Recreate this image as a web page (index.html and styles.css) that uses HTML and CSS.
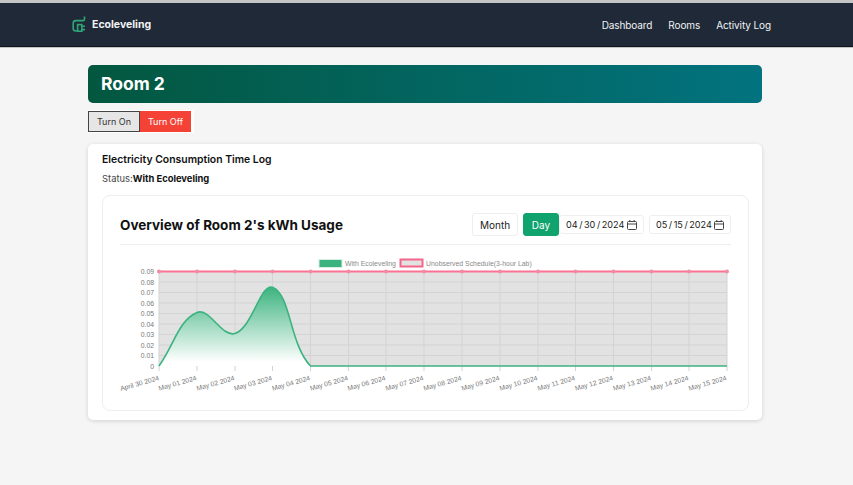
FILE: index.html
```html
<!DOCTYPE html>
<html lang="en">

<head>
    <meta charset="UTF-8">
    <meta name="viewport" content="width=device-width, initial-scale=1.0">
    <title>Room 2</title>
    <link rel="stylesheet" href="styles.css">
</head>

<body>
    <nav class="navbar">
        <a class="brand" href="#">
            <svg class="brand-icon" width="14" height="17" viewBox="0 0 14 17" fill="none" stroke="#2fa678" stroke-width="1.6">
                <path d="M12.5 0.5V3.2Q12.5 4.6 11 4.6H4Q1.2 4.6 1.2 7.2V12.5Q1.2 15 4 15H5.5" />
                <rect x="5.6" y="8.6" width="4.2" height="6.6" fill="#1f2937" />
                <path d="M9.8 10.2H13M9.8 13.6H13" />
            </svg>
            Ecoleveling
        </a>
        <ul class="nav-links">
            <li><a href="#">Dashboard</a></li>
            <li><a href="#">Rooms</a></li>
            <li><a href="#">Activity Log</a></li>
        </ul>
    </nav>

    <main class="content">
        <h1 class="room-banner">Room 2</h1>

        <div class="power-buttons">
            <button class="btn-on" type="button">Turn On</button>
            <button class="btn-off" type="button">Turn Off</button>
        </div>

        <section class="log-card">
            <h2>Electricity Consumption Time Log</h2>
            <p class="status">Status:<strong>With Ecoleveling</strong></p>

            <div class="chart-card">
                <div class="chart-header">
                    <h3>Overview of Room 2's kWh Usage</h3>
                    <div class="chart-controls">
                        <button class="btn-range" type="button">Month</button>
                        <button class="btn-range active" type="button">Day</button>
                        <div class="date-field">
                            04 / 30 / 2024
                            <svg width="10" height="10" viewBox="0 0 10 10" fill="none" stroke="#444" stroke-width="1">
                                <rect x="0.5" y="1.5" width="9" height="8" rx="1" />
                                <path d="M0.5 4H9.5M2.800 0V2M7.200 0V2" />
                            </svg>
                        </div>
                        <div class="date-field date-field-end">
                            05 / 15 / 2024
                            <svg width="10" height="10" viewBox="0 0 10 10" fill="none" stroke="#444" stroke-width="1">
                                <rect x="0.5" y="1.5" width="9" height="8" rx="1" />
                                <path d="M0.5 4H9.5M2.800 0V2M7.200 0V2" />
                            </svg>
                        </div>
                    </div>
                </div>

                <svg class="chart" width="611" height="150" viewBox="120 250 611 150">
                    <defs>
                        <linearGradient id="greenFade" gradientUnits="userSpaceOnUse" x1="0" y1="287" x2="0" y2="362">
                            <stop offset="0" stop-color="#3cb37f" />
                            <stop offset="1" stop-color="#ffffff" />
                        </linearGradient>
                    </defs>

                    <!-- legend -->
                    <rect x="319" y="259.500" width="23" height="8" fill="#3cb37f" stroke="#d5efe3" />
                    <text class="legend-text" x="345" y="265.500">With Ecoleveling</text>
                    <rect x="400.500" y="259.500" width="22" height="7" fill="#e2e2e2" stroke="#f4668a" stroke-width="2" />
                    <text class="legend-text" x="426" y="265.500">Unobserved Schedule(3-hour Lab)</text>

                    <!-- plot area and grid -->
                    <rect x="159" y="271.500" width="568" height="94.500" fill="#e2e2e2" />
                    <path class="grid" d="M159 282H727M159 292.500H727M159 303H727M159 313.500H727M159 324H727M159 334.500H727M159 345H727M159 355.500H727" />
                    <path class="grid" d="M159 271.500V371M197 271.500V371M235 271.500V371M272.500 271.500V371M310.500 271.500V371M348.500 271.500V371M386 271.500V371M424 271.500V371M462 271.500V371M500 271.500V371M538 271.500V371M575.500 271.500V371M613.500 271.500V371M651.500 271.500V371M689 271.500V371M727 271.500V371" />

                    <!-- y axis -->
                    <g class="axis-text" text-anchor="end">
                        <text x="154" y="274">0.09</text>
                        <text x="154" y="284.500">0.08</text>
                        <text x="154" y="295">0.07</text>
                        <text x="154" y="305.500">0.06</text>
                        <text x="154" y="316">0.05</text>
                        <text x="154" y="326.500">0.04</text>
                        <text x="154" y="337">0.03</text>
                        <text x="154" y="347.500">0.02</text>
                        <text x="154" y="358">0.01</text>
                        <text x="154" y="368.500">0</text>
                    </g>

                    <!-- with ecoleveling -->
                    <path d="M159 366C174.200 344.600 178.700 320.300 197 312.500C209.100 307.300 222.200 337.700 235 333.500C252.600 327.700 260.700 282.100 273 287.400C290.900 295.100 289.500 344.100 310.500 366Z" fill="url(#greenFade)" />
                    <path d="M159 366C174.200 344.600 178.700 320.300 197 312.500C209.100 307.300 222.200 337.700 235 333.500C252.600 327.700 260.700 282.100 273 287.400C290.900 295.100 289.500 344.100 310.500 366H727" fill="none" stroke="#3cb37f" stroke-width="1.600" />

                    <!-- unobserved schedule -->
                    <path d="M159 271.500H727" stroke="#fb7394" stroke-width="2" />
                    <g fill="#f58aa3">
                        <circle cx="159" cy="271.500" r="2" />
                        <circle cx="197" cy="271.500" r="2" />
                        <circle cx="235" cy="271.500" r="2" />
                        <circle cx="272.500" cy="271.500" r="2" />
                        <circle cx="310.500" cy="271.500" r="2" />
                        <circle cx="348.500" cy="271.500" r="2" />
                        <circle cx="386" cy="271.500" r="2" />
                        <circle cx="424" cy="271.500" r="2" />
                        <circle cx="462" cy="271.500" r="2" />
                        <circle cx="500" cy="271.500" r="2" />
                        <circle cx="538" cy="271.500" r="2" />
                        <circle cx="575.500" cy="271.500" r="2" />
                        <circle cx="613.500" cy="271.500" r="2" />
                        <circle cx="651.500" cy="271.500" r="2" />
                        <circle cx="689" cy="271.500" r="2" />
                        <circle cx="727" cy="271.500" r="2" />
                    </g>

                    <!-- x axis -->
                    <g class="axis-text" text-anchor="end">
                        <text transform="translate(159.500 380) rotate(-16)">April 30 2024</text>
                        <text transform="translate(197 380) rotate(-16)">May 01 2024</text>
                        <text transform="translate(235 380) rotate(-16)">May 02 2024</text>
                        <text transform="translate(272.500 380) rotate(-16)">May 03 2024</text>
                        <text transform="translate(310.500 380) rotate(-16)">May 04 2024</text>
                        <text transform="translate(348.500 380) rotate(-16)">May 05 2024</text>
                        <text transform="translate(386 380) rotate(-16)">May 06 2024</text>
                        <text transform="translate(424 380) rotate(-16)">May 07 2024</text>
                        <text transform="translate(462 380) rotate(-16)">May 08 2024</text>
                        <text transform="translate(500 380) rotate(-16)">May 09 2024</text>
                        <text transform="translate(538 380) rotate(-16)">May 10 2024</text>
                        <text transform="translate(575.500 380) rotate(-16)">May 11 2024</text>
                        <text transform="translate(613.500 380) rotate(-16)">May 12 2024</text>
                        <text transform="translate(651.500 380) rotate(-16)">May 13 2024</text>
                        <text transform="translate(689 380) rotate(-16)">May 14 2024</text>
                        <text transform="translate(727 380) rotate(-16)">May 15 2024</text>
                    </g>
                </svg>
            </div>
        </section>
    </main>
</body>

</html>
```

FILE: styles.css
```css
body {
    font-family: 'Inter', 'Open Sans', sans-serif;
    margin: 0;
    padding: 0;
    background-color: #f5f5f5;
    color: #111;
    min-height: 100vh;
}

.navbar {
    display: flex;
    justify-content: space-between;
    align-items: center;
    height: 43px;
    padding: 0 82px 0 72px;
    background-color: #1f2937;
    border-top: 3px solid #c4c4c4;
    border-bottom: 1px solid #0f1620;
    box-shadow: 0 1px 0 #c4c4c4;
}

.brand {
    display: flex;
    align-items: center;
    gap: 6px;
    color: #f1f3f5;
    font-size: 10.5px;
    font-weight: 700;
    text-decoration: none;
}

.nav-links {
    display: flex;
    gap: 16px;
    margin: 0;
    padding: 0;
    font-size: 10px;
    list-style: none;
}

.nav-links a {
    color: #f1f3f5;
    letter-spacing: -0.1px;
    text-decoration: none;
}

.content {
    width: 674px;
    margin-left: 88px;
    padding-top: 18px;
}

.room-banner {
    margin: 0;
    height: 38px;
    line-height: 38px;
    padding-left: 13px;
    border-radius: 5px;
    background: linear-gradient(90deg, #03573f, #02737f);
    color: #fff;
    font-size: 17.5px;
    font-weight: 700;
}

.power-buttons {
    display: inline-flex;
    margin-top: 7px;
    padding: 1px 3px 1px 0;
    background-color: #fff;
}

.power-buttons button {
    height: 21px;
    box-sizing: border-box;
    font-family: inherit;
    font-size: 9px;
    cursor: pointer;
}

.btn-on {
    width: 52px;
    background-color: #e6e6e6;
    color: #333;
    border: 1.5px solid #444;
}

.btn-off {
    width: 51px;
    background-color: #f44336;
    color: #fff;
    border: none;
}

.log-card {
    margin-top: 11px;
    height: 276px;
    box-sizing: border-box;
    padding: 10px 13px 10px 14px;
    background-color: #fff;
    border-radius: 5px;
    box-shadow: 0 1px 4px rgba(0, 0, 0, 0.15);
}

.log-card h2 {
    margin: 0;
    font-size: 10.4px;
    font-weight: 600;
    line-height: 12px;
}

.status {
    margin: 7px 0 0;
    font-size: 9.4px;
    line-height: 12px;
    color: #444;
}

.status strong {
    color: #111;
}

.chart-card {
    margin-top: 10px;
    height: 216px;
    box-sizing: border-box;
    padding: 0 17px;
    border: 1px solid #eee;
    border-radius: 8px;
}

.chart-header {
    display: flex;
    justify-content: space-between;
    align-items: center;
    height: 39px;
    padding-top: 9px;
    border-bottom: 1px solid #eee;
}

.chart-header h3 {
    margin: 0;
    font-size: 13.5px;
    font-weight: 700;
}

.chart-controls {
    display: flex;
    align-items: center;
}

.btn-range {
    width: 46px;
    height: 23px;
    padding: 0;
    margin-right: 5px;
    font-family: inherit;
    font-size: 10px;
    background-color: #fff;
    color: #222;
    border: 1px solid #eee;
    border-radius: 3px;
}

.btn-range.active {
    width: 36px;
    margin-right: 0;
    background-color: #10a36d;
    color: #fff;
    border-color: #10a36d;
}

.date-field {
    display: flex;
    align-items: center;
    justify-content: space-between;
    width: 85px;
    height: 19px;
    box-sizing: border-box;
    margin-right: 5px;
    padding: 0 6px;
    font-size: 9.1px;
    white-space: nowrap;
    word-spacing: -1px;
    color: #222;
    background-color: #fff;
    border: 1px solid #eee;
    border-radius: 3px;
}

.date-field svg {
    flex-shrink: 0;
}

.date-field-end {
    width: 82px;
    margin-right: 0;
}

.chart {
    display: block;
    margin-top: 5px;
}

.grid {
    fill: none;
    stroke: #d3d3d3;
    stroke-width: 1;
}

.axis-text text {
    font-family: 'Liberation Sans', sans-serif;
    font-size: 6.8px;
    fill: #777;
}

.legend-text {
    font-family: 'Liberation Sans', sans-serif;
    font-size: 6.9px;
    fill: #888;
}
```
